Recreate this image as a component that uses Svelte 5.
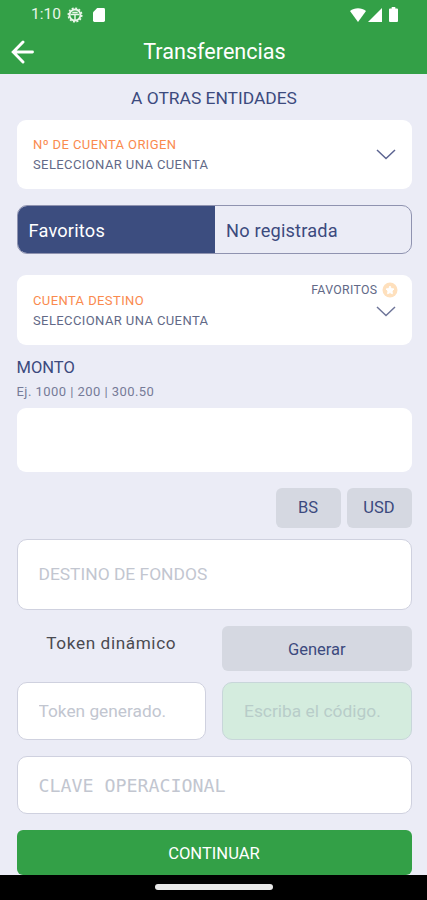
<script>

let currencies = ['BS', 'USD']

let tabs = ['Favoritos', 'No registrada']

let activeTab = 0

let amount = ''
let destination = ''
let token = ''
let code = ''
let password = ''

function selectTab(index) {
  activeTab = index
}

</script>


<div class="screen">

  <header>
    <div class="status">
      <span class="time">1:10</span>
      <svg class="gear" width="16" height="16" viewBox="0 0 16 16">
        <circle cx="8" cy="8" r="5.5" fill="none" stroke="#e9f6e9" stroke-width="1.9" />
        <circle cx="8" cy="8" r="6.8" fill="none" stroke="#e9f6e9" stroke-width="1.5" stroke-dasharray="2 1.56" />
        <path d="M3.500 7.500h9M8 7.500v5.500M5.300 5.500h5.400" fill="none" stroke="#e9f6e9" stroke-width="1.500" />
      </svg>
      <svg class="card-icon" width="12" height="14" viewBox="0 0 12 14">
        <path d="M4.200 0H10.600Q12 0 12 1.400V12.600Q12 14 10.600 14H1.400Q0 14 0 12.600V4.200Z" fill="#fff" />
      </svg>
      <div class="signals">
        <svg width="16" height="14" viewBox="0 0 16 14">
          <path d="M0 3C4.400-.7 11.600-.7 16 3L8 14Z" fill="#fff" />
        </svg>
        <svg width="14" height="14" viewBox="0 0 14 14">
          <path d="M14 0V14H0Z" fill="#fff" />
        </svg>
        <svg class="battery" width="9" height="15" viewBox="0 0 9 15">
          <path d="M2.700 0H6.300V1.500H8Q9 1.500 9 2.500V14Q9 15 8 15H1Q0 15 0 14V2.500Q0 1.500 1 1.500H2.700Z" fill="#fff" />
        </svg>
      </div>
    </div>

    <div class="bar">
      <button class="back" aria-label="Volver">
        <svg width="24" height="24" viewBox="0 0 24 24">
          <path d="M21.500 12H3M12 2L2.200 12L12 22" fill="none" stroke="#fff" stroke-width="2.900" stroke-linecap="round" />
        </svg>
      </button>
      <h1>Transferencias</h1>
    </div>
  </header>

  <main>
    <h2>A OTRAS ENTIDADES</h2>

    <div class="account">
      <div class="info">
        <p class="label">Nº DE CUENTA ORIGEN</p>
        <p>SELECCIONAR UNA CUENTA</p>
      </div>
      <svg class="chevron" width="20" height="11" viewBox="0 0 20 11">
        <path d="M1 1L10 9.500L19 1" fill="none" stroke="#5c6491" stroke-width="1.500" />
      </svg>
    </div>

    <div class="tabs">
      {#each tabs as tab, index}
        <button class:active={activeTab === index} on:click={() => selectTab(index)}>{tab}</button>
      {/each}
    </div>

    <div class="account second">
      <div class="info">
        <p class="label">CUENTA DESTINO</p>
        <p>SELECCIONAR UNA CUENTA</p>
      </div>
      <div class="side">
        <div class="favorites">
          <span>FAVORITOS</span>
          <svg width="16" height="16" viewBox="0 0 16 16">
            <circle cx="8" cy="8" r="7.500" fill="#fee0bd" />
            <path d="M8 4L9.200 6.500L12 7L10 9L10.400 11.800L8 10.600L5.600 11.800L6 9L4 7L6.800 6.500Z" fill="#fff" stroke="#fff" stroke-linejoin="round" />
          </svg>
        </div>
        <svg class="chevron" width="20" height="11" viewBox="0 0 20 11">
          <path d="M1 1L10 9.500L19 1" fill="none" stroke="#6e7599" stroke-width="1.500" />
        </svg>
      </div>
    </div>

    <label class="amount-label" for="amount">MONTO</label>
    <p class="hint">Ej. 1000 | 200 | 300.50</p>
    <input id="amount" class="amount" bind:value={amount} />

    <div class="currencies">
      {#each currencies as currency}
        <button class="grey">{currency}</button>
      {/each}
    </div>

    <input class="destination" placeholder="DESTINO DE FONDOS" bind:value={destination} />

    <div class="token">
      <p>Token dinámico</p>
      <button class="grey generate">Generar</button>
      <input class="generated" placeholder="Token generado." bind:value={token} />
      <input class="code" placeholder="Escriba el código." bind:value={code} />
    </div>

    <input class="password" placeholder="CLAVE OPERACIONAL" bind:value={password} />

    <button class="continue">CONTINUAR</button>
  </main>

  <footer>
    <div class="handle"></div>
  </footer>

</div>


<style>

  :global(body) {
    margin: 0;
  }

  .screen {
    display: flex;
    flex-direction: column;
    width: 100%;
    height: 900px;
    overflow: hidden;
    background: #ebecf6;
    font-family: Roboto, "Liberation Sans", sans-serif;
    color: #3c4a7e;
  }

  .screen * {
    box-sizing: border-box;
  }

  svg {
    display: block;
    flex: none;
  }

  p, h1, h2 {
    margin: 0;
    font-weight: 400;
  }

  button {
    padding: 0;
    border: none;
    background: none;
    color: inherit;
    font-family: inherit;
    cursor: pointer;
  }

  header {
    height: 74px;
    flex: none;
    background: #33a047;
    color: #fff;
  }

  .status {
    display: flex;
    align-items: center;
    height: 29px;
    padding: 0 29px 0 31px;
  }

  .time {
    width: 36px;
    font-size: 15.5px;
    line-height: 29px;
    color: #e9f6e9;
  }

  .card-icon {
    margin-left: 10px;
  }

  .signals {
    display: flex;
    align-items: center;
    margin-left: auto;
    gap: 2px;
  }

  .battery {
    margin-left: 5px;
  }

  .bar {
    display: grid;
    grid-template-columns: 46px 1fr 44px;
    align-items: center;
    height: 45px;
  }

  .back {
    padding-left: 11px;
  }

  h1 {
    text-align: center;
    font-size: 21.6px;
    line-height: 45px;
  }

  main {
    display: flex;
    flex-direction: column;
    flex: none;
    height: 801px;
    padding: 0 15.5px 0 16.5px;
  }

  h2 {
    flex: none;
    height: 46.3px;
    padding-top: 12px;
    text-align: center;
    font-size: 17.4px;
    line-height: 24px;
  }

  .account {
    display: flex;
    flex: none;
    justify-content: space-between;
    height: 68.7px;
    padding: 15px 16px 0 16.5px;
    border-radius: 9px;
    background: #fff;
  }

  .info {
    font-size: 13px;
    line-height: 20px;
    letter-spacing: 0.4px;
    color: #626987;
  }

  .label {
    color: #fa8a4e;
  }

  .account > .chevron {
    margin-top: 14px;
  }

  .tabs {
    display: grid;
    flex: none;
    grid-template-columns: 197.5px 1fr;
    height: 49.3px;
    margin: 16.2px 0 21px;
    border: 1px solid #8f93b0;
    border-radius: 10px;
    overflow: hidden;
  }

  .tabs button {
    padding: 1px 0 0 11px;
    text-align: left;
    font-size: 18.2px;
    letter-spacing: 0.2px;
  }

  .tabs .active {
    background: #3c4d7f;
    color: #fff;
  }

  .side {
    display: flex;
    flex-direction: column;
    align-items: flex-end;
    margin: -10px -2px 0 0;
  }

  .favorites {
    display: flex;
    align-items: center;
    gap: 4px;
    height: 18px;
    font-size: 12.3px;
    letter-spacing: 0.35px;
    color: #626987;
  }

  .side .chevron {
    margin: 7px 2px 0 0;
  }

  .second {
    height: 69.8px;
    padding-top: 15.5px;
  }

  .amount-label {
    margin-top: 12px;
    font-size: 16.5px;
    line-height: 22px;
  }

  .hint {
    flex: none;
    height: 29px;
    padding-top: 3px;
    font-size: 13px;
    line-height: 20px;
    letter-spacing: 0.45px;
    color: #767b98;
  }

  input {
    width: 100%;
    min-width: 0;
    padding: 0 21px;
    border: 1px solid #cfd1df;
    border-radius: 10px;
    outline: none;
    background: #fff;
    color: #3c4a7e;
    font-family: inherit;
    font-size: 17.4px;
  }

  input::placeholder {
    color: #c2c6d0;
    opacity: 1;
  }

  .amount {
    height: 63.4px;
    flex: none;
    border: none;
    border-radius: 9px;
  }

  .currencies {
    display: flex;
    flex: none;
    justify-content: flex-end;
    gap: 6px;
    margin: 16px 0 11px;
  }

  .grey {
    width: 65px;
    height: 40px;
    border-radius: 6px;
    background: #d5d8e1;
    font-size: 16.5px;
  }

  .destination {
    height: 71.3px;
    flex: none;
  }

  .token {
    display: grid;
    flex: none;
    grid-template-columns: 1fr 1fr;
    grid-template-rows: 44.5px 58.5px;
    gap: 11px 16px;
    margin: 16.2px 0 16px;
  }

  .token p {
    padding-top: 6px;
    text-align: center;
    font-size: 17.2px;
    line-height: 22px;
    letter-spacing: 0.6px;
    color: #4a4a50;
  }

  .generate {
    width: 100%;
    height: 44.5px;
    padding-top: 2px;
  }

  .generated {
    font-size: 17.300px;
  }

  .code {
    padding-top: 1px;
    background: #d4ecde;
    border-color: #c8d6da;
  }

  .code::placeholder {
    color: #b8ccc9;
  }

  .password {
    height: 58px;
    flex: none;
    font-family: "DejaVu Sans Mono", monospace;
    font-size: 18.3px;
  }

  .continue {
    flex: none;
    height: 44.5px;
    margin-top: 16.3px;
    padding-top: 1px;
    border-radius: 6px;
    background: #33a047;
    color: #fff;
    font-size: 16.6px;
  }

  footer {
    display: flex;
    justify-content: center;
    flex: none;
    height: 25px;
    padding-top: 9px;
    background: #000;
  }

  .handle {
    width: 118px;
    height: 6px;
    border-radius: 3px;
    background: #e9e9e9;
  }

</style>
